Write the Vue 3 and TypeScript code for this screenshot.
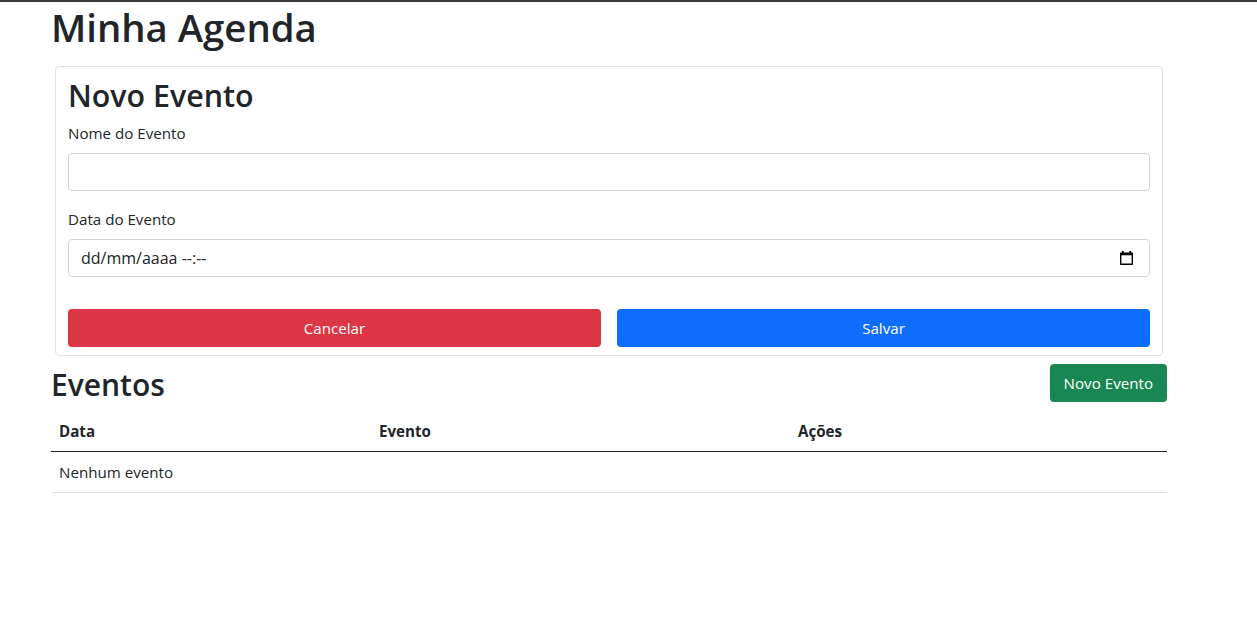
<template>
  <div class="container">
    <h1 class="title">Minha Agenda</h1>

    <form class="card" @submit.prevent>
      <h2 class="heading">Novo Evento</h2>
      <div class="field">
        <label class="label" for="nome">Nome do Evento</label>
        <input id="nome" v-model="nome" class="control" type="text" />
      </div>
      <div class="field">
        <label class="label" for="data">Data do Evento</label>
        <div class="date-wrap">
          <input id="data" v-model="data" class="control date-input" type="text" />
          <svg class="date-icon" width="13" height="14" viewBox="0 0 14 15" aria-hidden="true">
            <path fill="#000" d="M2 0h2v1.500h6V0h2v1.500h1.200c.5 0 .8.3.8.8v11.900c0 .5-.3.8-.8.8H.8c-.5 0-.8-.3-.8-.8V2.300c0-.5.3-.8.8-.8H2zM1.500 4.500v8.800h11V4.500z" />
          </svg>
        </div>
      </div>
      <div class="actions">
        <button class="btn btn-danger" type="button">Cancelar</button>
        <button class="btn btn-primary" type="submit">Salvar</button>
      </div>
    </form>

    <div class="list-head">
      <h2 class="heading list-title">Eventos</h2>
      <button class="btn btn-success" type="button">Novo Evento</button>
    </div>

    <table class="table">
      <colgroup>
        <col style="width: 320px" />
        <col style="width: 419px" />
        <col />
      </colgroup>
      <thead>
        <tr>
          <th>Data</th>
          <th>Evento</th>
          <th>Ações</th>
        </tr>
      </thead>
      <tbody>
        <tr>
          <td colspan="3">Nenhum evento</td>
        </tr>
      </tbody>
    </table>
  </div>
</template>

<script setup lang="ts">
import { ref } from "vue";

const nome = ref("");
const data = ref("dd/mm/aaaa --:--");
</script>

<style>
body {
  border-top: 2px solid #3a3a3a;
  background: #fff;
}
</style>

<style scoped>
.container {
  width: 1116px;
  margin-left: 51px;
  color: #212529;
  font-family: "Open Sans", "Noto Sans", sans-serif;
  font-size: 15.15px;
  line-height: 24px;
}

.title {
  margin: 0 0 14px;
  font-size: 38.3px;
  font-weight: 600;
  line-height: 50px;
}

.card {
  margin: 0 4px 8px;
  padding: 12px 12px 8px;
  border: 1px solid #dee2e6;
  border-radius: 4px;
}

.heading {
  margin: 0 0 8px;
  font-size: 30.4px;
  font-weight: 600;
  line-height: 34px;
}

.list-title {
  margin: 4px 0 9px;
  font-size: 30px;
}

.field {
  margin-bottom: 16px;
}

.label {
  display: block;
  margin-bottom: 8px;
}

.date-wrap {
  position: relative;
}

.date-icon {
  position: absolute;
  top: 12px;
  right: 17px;
}

.control {
  display: block;
  box-sizing: border-box;
  width: 100%;
  height: 38px;
  padding: 6px 12px;
  border: 1px solid #ced4da;
  border-radius: 4px;
  color: #212529;
  font: inherit;
  outline: none;
}

.date-input {
  font-size: 16px;
}

.actions {
  display: grid;
  grid-template-columns: 1fr 1fr;
  gap: 16px;
  margin-top: 32px;
}

.btn {
  height: 38px;
  padding: 6px 14px;
  border: 0;
  border-radius: 4px;
  color: #fff;
  font: inherit;
}

.btn-danger {
  background: #dc3545;
}

.btn-primary {
  background: #0d6efd;
}

.btn-success {
  background: #198754;
}

.list-head {
  display: flex;
  align-items: flex-start;
  justify-content: space-between;
}

.table {
  width: 100%;
  border-collapse: collapse;
  table-layout: fixed;
}

.table th,
.table td {
  padding: 8px;
  text-align: left;
}

.table th {
  border-bottom: 1px solid #212529;
  font-weight: 700;
}

.table td {
  border-bottom: 1px solid #dee2e6;
}
</style>
